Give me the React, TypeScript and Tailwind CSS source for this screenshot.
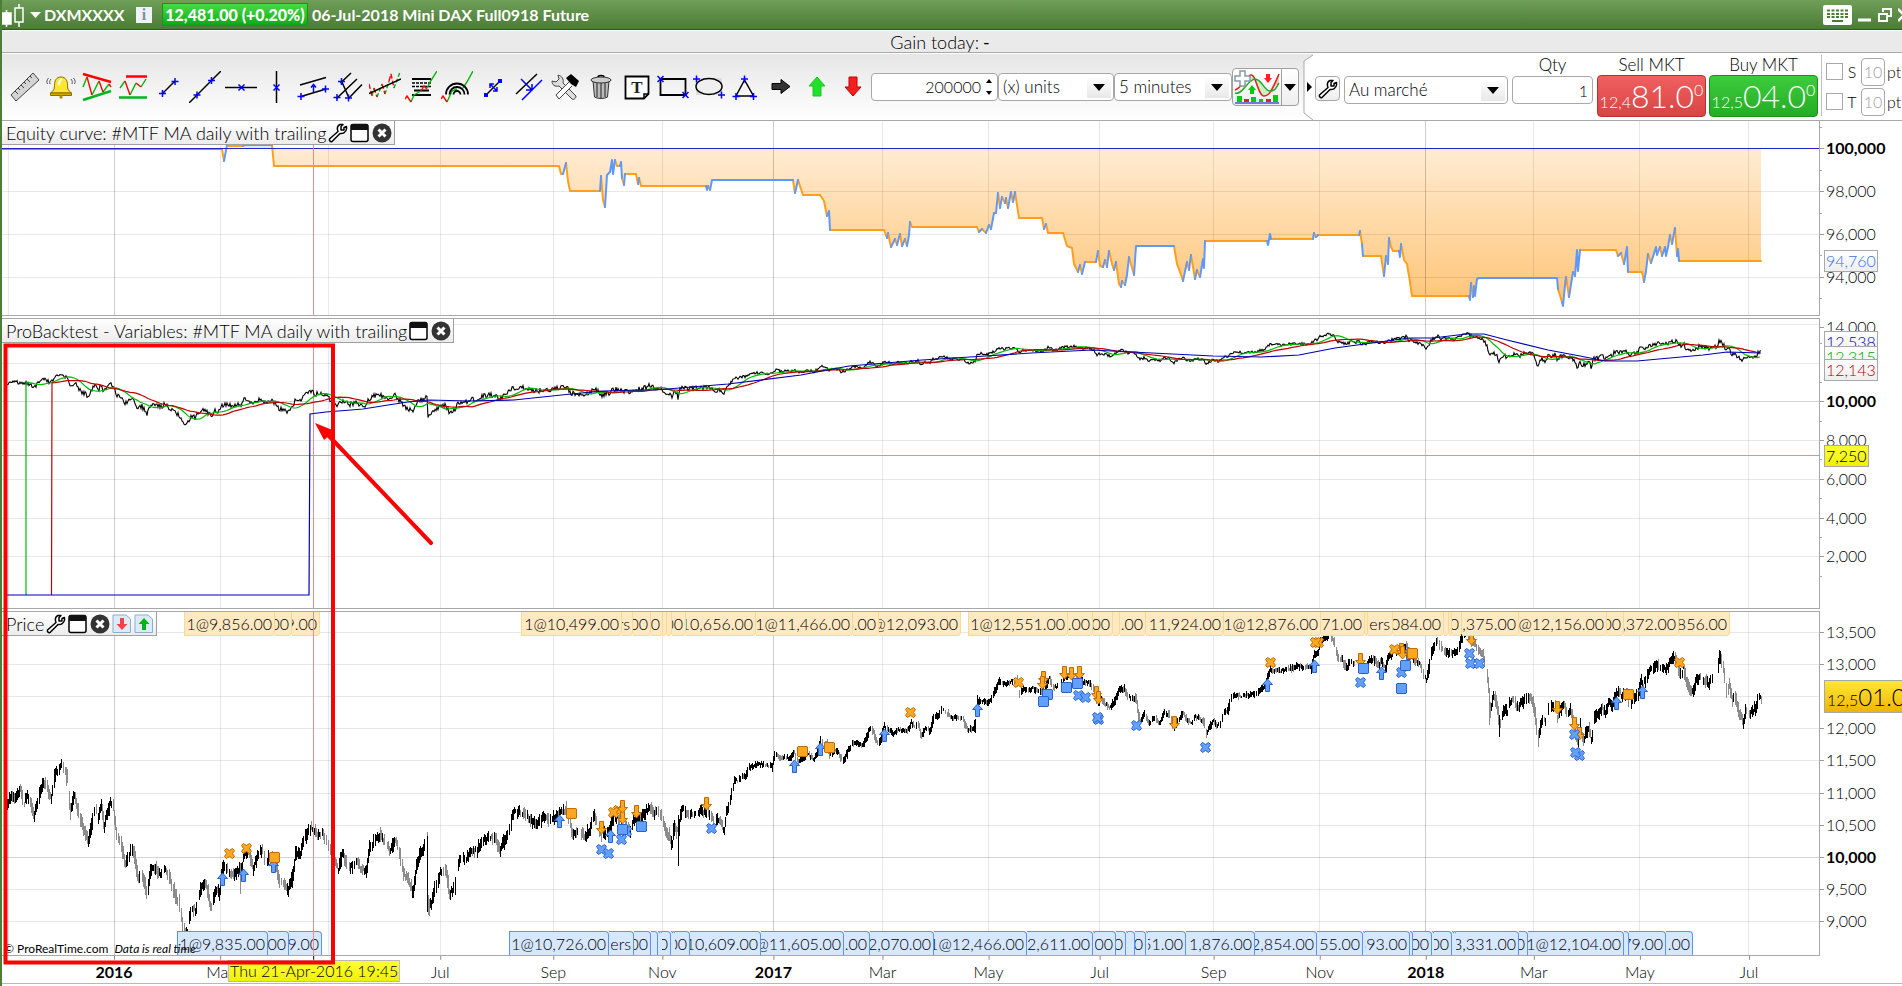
import React from "react";

type Pt = [number, number];

const parse = (s: string): Pt[] =>
  s.trim().split(/\s+/).map((p) => p.split(",").map(Number) as Pt);

/* ------------------------------------------------------------------ data */

const MONTHS = [8, 114, 220, 328, 440, 553, 662, 773, 882, 988, 1099, 1213, 1319, 1425, 1533, 1639, 1748];
const YEARS = [114, 773, 1425];
const CURSOR_X = 313;

const EQUITY = parse(`2,149 222,149 224,161 227,145 229,146 243,146 244,145 272,145 274,166 559,166 561,174 563,174 566,163 568,181 570,191
600,191 601,176 603,200 605,207 607,175 610,172 612,160 613,174 615,160 617,166 620,166 621,162 622,178 624,185 625,174 636,174 638,184
639,178 641,186 706,186 707,190 708,186 710,190 712,180 793,180 795,193 798,180 801,189 803,195 820,195 824,201 827,216 829,211 830,230
884,230 887,238 888,233 891,247 895,239 897,245 900,234 902,246 905,239 907,246 909,235 910,222 912,227 977,227 979,232 982,229 986,233
989,225 991,229 994,213 996,213 998,193 1000,208 1002,197 1005,203 1006,198 1008,208 1011,192 1013,202 1015,192 1019,218 1042,218
1044,229 1046,224 1048,233 1063,233 1067,246 1072,248 1074,264 1078,272 1080,265 1082,274 1085,262 1096,262 1098,251 1100,266 1103,267
1105,260 1107,267 1109,251 1112,264 1114,270 1116,262 1119,284 1121,287 1122,281 1125,285 1127,275 1129,257 1134,275 1136,246 1174,246
1177,264 1180,272 1183,281 1187,262 1189,270 1191,255 1195,279 1197,270 1200,277 1203,259 1204,268 1205,241 1267,241 1268,245 1270,234
1271,239 1313,239 1314,233 1316,237 1318,235 1359,235 1360,231 1362,244 1363,256 1381,256 1384,276 1386,256 1388,264 1389,238 1391,247
1393,251 1399,251 1400,257 1401,244 1404,260 1407,264 1410,282 1412,296 1469,296 1470,300 1471,283 1473,297 1474,286 1475,296 1477,279
1479,278 1557,278 1558,289 1562,302 1563,306 1565,285 1566,277 1569,297 1573,272 1575,276 1577,250 1578,271 1580,250 1616,250 1618,256
1621,253 1624,264 1627,247 1628,272 1642,272 1644,282 1646,271 1648,254 1651,263 1656,247 1657,255 1660,247 1662,256 1665,247 1666,256
1668,247 1670,235 1672,244 1675,228 1677,256 1678,249 1679,261 1761,261`);

const BLUE_FLATS = [2, 712, 1136, 1479, 244];

const PRICE = parse(`7,803 11,795 16,797 20,790 24,802 27,795 34,815 38,800 42,785 46,785 51,797 55,775 57,770 62,765 67,778 70,812 74,795
80,820 88,840 91,825 95,805 98,820 101,805 104,825 110,803 113,806 116,835 120,840 125,865 130,852 133,850 138,880 142,875 147,897 150,870
155,868 160,875 165,868 170,880 175,895 180,905 182,925 187,935 191,905 195,912 200,888 206,885 211,908 215,890 219,893 222,868 228,870
233,875 238,870 242,868 243,855 248,850 253,868 258,855 262,850 266,865 270,855 276,865 279,880 284,885 288,890 293,873 295,855 300,853
304,840 308,830 311,827 314,830 318,835 322,833 326,840 330,850 333,858 338,870 342,855 346,860 350,868 356,862 361,868 366,870 369,850
374,840 380,836 385,842 390,850 395,838 400,855 403,873 408,880 413,892 416,867 419,855 423,850 427,838 428,905 431,905 434,890 440,873
446,870 449,895 455,885 457,865 461,858 465,860 470,852 477,850 483,840 490,836 495,838 500,850 505,838 510,825 513,813 518,812 524,812
530,820 535,825 540,822 545,815 550,820 555,817 560,812 566,810 570,825 572,832 580,832 585,838 590,828 594,815 598,825 602,838 605,832
609,830 612,820 616,818 621,820 625,825 630,830 633,820 637,818 641,818 645,812 649,807 654,813 659,813 662,818 666,832 670,838 672,845
673,830 677,830 678,858 679,830 680,815 682,810 686,812 689,815 695,813 698,813 702,811 705,813 711,815 714,823 718,818 721,823 724,832
726,812 729,805 732,790 734,781 738,781 741,777 745,776 748,768 752,766 757,764 764,765 772,766 774,757 777,754 780,758 786,758 791,758
794,752 796,760 802,760 807,754 814,759 818,752 820,740 823,744 827,745 829,755 834,750 838,752 842,761 845,757 848,750 852,744 857,742
862,746 866,738 870,728 873,732 877,743 880,740 884,726 888,729 893,733 898,730 904,731 909,729 911,722 914,726 918,724 921,736 925,728
930,731 933,718 938,715 942,708 946,712 952,718 957,717 963,720 968,730 971,729 975,726 977,703 981,700 986,703 992,698 995,690 999,680
1004,684 1011,682 1017,682 1019,695 1024,688 1028,690 1033,688 1038,692 1043,690 1046,685 1049,677 1053,688 1058,685 1063,679 1069,676
1076,676 1083,682 1088,682 1094,690 1097,705 1101,698 1104,703 1110,707 1115,700 1119,690 1124,689 1128,697 1133,698 1136,700 1138,715
1140,720 1144,713 1149,723 1154,718 1160,723 1164,712 1169,715 1174,730 1178,720 1183,713 1187,720 1192,723 1195,716 1199,718 1204,722
1206,734 1210,726 1213,721 1217,725 1221,722 1224,712 1228,710 1230,698 1235,695 1242,696 1249,695 1256,694 1261,688 1265,685 1268,675
1270,670 1276,670 1281,671 1286,669 1292,668 1297,666 1303,668 1308,667 1311,668 1314,655 1318,652 1320,642 1326,637 1329,634 1333,640
1336,650 1338,658 1342,660 1346,668 1351,660 1354,663 1359,658 1361,666 1365,668 1369,660 1373,658 1378,665 1381,662 1385,668 1388,657
1394,650 1401,652 1406,645 1409,655 1415,662 1420,664 1424,675 1426,680 1429,668 1431,655 1435,645 1438,641 1442,650 1447,652 1453,653
1457,650 1460,642 1463,633 1467,632 1470,640 1475,645 1479,652 1483,655 1485,665 1487,678 1489,695 1490,710 1493,695 1496,700 1499,725
1502,715 1505,708 1507,715 1508,705 1513,700 1517,708 1522,702 1527,696 1530,698 1533,705 1535,718 1538,740 1540,725 1542,718 1545,722
1548,710 1552,706 1555,705 1557,718 1560,710 1564,706 1567,715 1570,710 1573,720 1576,735 1578,745 1580,725 1583,740 1587,730 1589,728
1591,742 1594,718 1598,714 1602,708 1605,714 1608,702 1612,704 1615,696 1617,692 1622,695 1627,696 1630,707 1633,698 1638,692 1641,680
1643,685 1647,677 1649,669 1653,670 1657,665 1662,669 1667,667 1670,662 1675,657 1678,668 1681,676 1683,668 1686,680 1689,690 1693,692
1696,680 1700,677 1705,680 1708,685 1713,676 1717,675 1719,657 1722,662 1724,675 1726,690 1729,686 1732,700 1735,697 1738,712 1741,716
1743,722 1746,708 1748,716 1752,710 1756,708 1758,698 1761,698`);

const SLOW_MA = `7,595 309,595 310,414 326,412 363,409 388,405 408,402 429,400 469,401 514,400 571,394 604,391 640,390 655,390 728,384
801,375 849,366 922,360 970,357 1031,353 1092,350 1152,353 1213,356 1262,357 1299,355 1335,348 1372,343 1409,338 1433,338 1466,334
1484,334 1507,340 1548,350 1580,356 1605,361 1637,361 1670,358 1703,355 1727,352 1761,353`;

type Tag = [number, number, string];

const SELL_TAGS: Tag[] = [
  [184, 275, "1@9,856.00"], [275, 292, "00"], [292, 320, "9.00"],
  [521, 622, "1@10,499.00"], [622, 633, "rs"], [633, 651, "00"], [651, 663, "0"], [663, 667, ""], [667, 672, ""], [672, 686, "00"],
  [686, 756, "10,656.00"], [756, 853, "1@11,466.00"], [853, 879, "6.00"], [879, 961, "@12,093.00"],
  [968, 1068, "1@12,551.00"], [1068, 1093, ".00"], [1093, 1113, "00"], [1113, 1120, ""], [1120, 1146, ".00"], [1146, 1148, ""],
  [1148, 1224, "11,924.00"], [1224, 1321, "1@12,876.00"], [1321, 1365, "71.00"], [1365, 1368, ""], [1368, 1393, "ers"],
  [1393, 1444, "084.00"], [1444, 1449, ""], [1449, 1452, ""], [1452, 1462, "0"], [1462, 1519, ",375.00"], [1519, 1607, "@12,156.00"],
  [1607, 1624, "00"], [1624, 1679, ",372.00"], [1679, 1730, "856.00"],
];

const BUY_TAGS: Tag[] = [
  [177, 268, "1@9,835.00"], [268, 289, "00"], [289, 322, "9.00"],
  [509, 609, "1@10,726.00"], [609, 634, "ers"], [634, 651, "00"], [651, 658, ""], [658, 660, ""], [660, 662, ""], [662, 671, "0"],
  [671, 673, ""], [673, 675, ""], [675, 690, "00"], [690, 761, "10,609.00"], [761, 844, "@11,605.00"], [844, 870, ".00"],
  [870, 934, "2,070.00"], [934, 1027, "1@12,466.00"], [1027, 1093, "2,611.00"], [1093, 1095, ""], [1095, 1116, "00"],
  [1116, 1126, "0"], [1126, 1128, ""], [1128, 1135, ""], [1135, 1146, "0"], [1146, 1148, ""], [1148, 1186, "51.00"],
  [1186, 1255, "1,876.00"], [1255, 1317, "2,854.00"], [1317, 1363, "55.00"], [1363, 1365, ""], [1365, 1410, "393.00"],
  [1410, 1413, ""], [1413, 1432, "00"], [1432, 1434, ""], [1434, 1452, "00"], [1452, 1454, ""], [1454, 1456, ""],
  [1456, 1519, "3,331.00"], [1519, 1528, "0"], [1528, 1624, "1@12,104.00"], [1624, 1629, ""], [1629, 1666, "79.00"], [1666, 1693, ".00"],
];

const MARKS: Record<"xo" | "xb" | "so" | "sb" | "do" | "ub", Pt[]> = {
  ub: parse("222,879 243,875 273,866 559,821 610,836 794,766 820,749 884,735 977,710 1267,685 1314,666 1381,673 1408,653 1616,703 1642,692"),
  xo: parse("229,853 246,848 618,810 613,812 910,712 1018,682 1270,662 1318,642 1315,642 1394,649 1679,662"),
  do: parse("601,827 622,817 622,806 636,811 706,803 1043,677 1042,682 1064,672 1071,673 1079,672 1096,692 1098,697 1174,722 1360,659 1401,649 1402,652 1471,638 1557,707 1579,733 1574,723"),
  xb: parse("626,831 621,839 601,849 608,853 711,828 1078,695 1085,697 1098,719 1097,717 1136,725 1205,747 1360,682 1401,672 1469,653 1470,663 1479,663 1574,734 1579,755 1575,752"),
  so: parse("274,857 571,813 802,751 829,747 1412,653 1628,694"),
  sb: parse("622,829 641,826 1047,694 1043,701 1066,687 1077,683 1363,668 1405,665 1401,688"),
};

/* --------------------------------------------------------------- helpers */

const line = (pts: Pt[]) => "M" + pts.map((p) => `${p[0]},${p[1].toFixed(1)}`).join("L");

const noise = (n: number) => {
  const v = Math.sin(n * 127.1 + 11.7) * 43758.5453;
  return (v - Math.floor(v)) * 2 - 1;
};

const at = (pts: Pt[], x: number) => {
  let i = 1;
  while (i < pts.length - 1 && pts[i][0] < x) i++;
  const [x0, y0] = pts[i - 1];
  const [x1, y1] = pts[i];
  const t = Math.max(0, Math.min(1, (x - x0) / (x1 - x0)));
  return y0 + (y1 - y0) * t;
};

const SERIES: Pt[] = Array.from({ length: 1755 }, (_, i) => [7 + i, at(PRICE, 7 + i)] as Pt);

const volatility = (x: number) => (x < 720 ? 4.2 : x < 1330 ? 2.3 : x < 1485 ? 3 : 4);

function priceBars() {
  let up = "";
  let down = "";
  SERIES.forEach(([x, y], i) => {
    if (noise(x + 77) < -0.7) return;
    const v = volatility(x);
    const mid = y + noise(x) * v * 0.6;
    const slope = SERIES[Math.min(i + 2, SERIES.length - 1)][1] - SERIES[Math.max(i - 2, 0)][1];
    const half = v * (0.5 + Math.abs(noise(x + 500)) * 0.9) + Math.min(4, Math.abs(slope) / 5);
    const bar = `M${x + 0.5},${(mid - half).toFixed(1)}V${(mid + half).toFixed(1)}`;
    if (slope + noise(x + 900) * 5 > 2) down += bar;
    else up += bar;
  });
  return { up, down };
}

const toVariable = (y: number) => 401.3 + (y - 857.3) * 0.3027;

const average = (period: number): Pt[] => {
  const out: Pt[] = [];
  for (let i = period; i < SERIES.length; i += 3) {
    let sum = 0;
    for (let k = i - period; k < i; k++) sum += SERIES[k][1];
    out.push([SERIES[i][0], toVariable(sum / period)]);
  }
  return out;
};

const BARS = priceBars();
const FAST = average(19);
const MEDIUM = average(45);
const CLOSE: Pt[] = SERIES.map(([x, y]) => [x, toVariable(y) + noise(x + 30) * volatility(x) * 0.6]);

/* ----------------------------------------------------------------- icons */

const Plus = ({ x, y }: { x: number; y: number }) => (
  <path d={`M${x - 3.5},${y}h7M${x},${y - 3.5}v7`} stroke="#00f" strokeWidth="1.5" />
);
const Cross = ({ x, y }: { x: number; y: number }) => (
  <path d={`M${x - 3},${y - 3}l6,6M${x + 3},${y - 3}l-6,6`} stroke="#00f" strokeWidth="1.5" />
);

const K = { stroke: "#000", strokeWidth: 1.5, fill: "none" };
const B = { stroke: "#00f", strokeWidth: 1.5, fill: "none" };
const G = { stroke: "#00b400", strokeWidth: 1.4, fill: "none" };
const R = { stroke: "#f00", strokeWidth: 1.4, fill: "none" };

const TOOLS: { name: string; icon: React.ReactNode }[] = [
  { name: "Ruler", icon: <><path d="M2,24L24,2L30,9L7,30Z" fill="#d4d4d4" stroke="#444" /><path d="M6,20l3,3M9,17l2,2M12,14l3,3M15,11l2,2M18,8l3,3M21,5l2,2" stroke="#444" /></> },
  { name: "Alarm", icon: <><path d="M16,6c-5,0-6.500,4-6.500,8.500c0,4-1,5-4,7.500h21c-3-2.500-4-3.500-4-7.500C22.500,10,21,6,16,6Z" fill="#ffe633" stroke="#8a6d00" /><path d="M14,14c0-3,1-5,3-6" stroke="#fff" strokeWidth="2" fill="none" /><path d="M5.500,22h21v2.500h-21Z" fill="#d9a900" stroke="#8a6d00" /><circle cx="16" cy="26" r="1.700" fill="#b98d00" /><path d="M6,8c-1.500,2-1.500,3-1,5M3.500,7c-2,2.500-2,4-1,6M26,8c1.500,2,1.500,3,1,5M28.500,7c2,2.500,2,4,1,6" stroke="#555" fill="none" /></> },
  { name: "Triangle pattern", icon: <><path d="M2,16L6,6M11,24L18,10M22,21L28,13" {...G} /><path d="M6,6L11,24M18,10L22,21M28,13l2,3" {...R} /><path d="M2,3L30,11" stroke="#f00" strokeWidth="2.500" /><path d="M2,29L30,20" stroke="#00b41e" strokeWidth="2.500" /></> },
  { name: "Support and resistance", icon: <><path d="M3,17L8,10M13,24L19,12M24,16L29,8" {...G} /><path d="M8,10L13,24M19,12L24,16" {...R} /><path d="M9,5.500H30" stroke="#f00" strokeWidth="2.500" /><path d="M2,26.500H30" stroke="#00b41e" strokeWidth="2.500" /></> },
  { name: "Segment", icon: <><path d="M10,22L22,10" {...K} /><Plus x={9.5} y={22.5} /><Plus x={22} y={10.5} /></> },
  { name: "Line", icon: <><path d="M0,32L32,0" {...K} /><Plus x={8} y={24} /><Plus x={22.5} y={9.5} /></> },
  { name: "Horizontal line", icon: <><path d="M0,16.500H32" {...K} /><Cross x={16.5} y={16.5} /></> },
  { name: "Vertical line", icon: <><path d="M15.500,0V32" {...K} /><Cross x={15.5} y={16.5} /></> },
  { name: "Channel", icon: <><path d="M3,14L29,6.500M4,25.500L29,18" {...K} /><Plus x={4} y={25.5} /><Plus x={28.5} y={18} /><path d="M16.500,21V14M14,16.500L16.500,13.500L19,16.500" {...B} /></> },
  { name: "Pitchfork", icon: <><path d="M18,2L7.500,12M24,8L3.500,27.500M29,13.500L15.500,27.500M8.500,10L16,27" {...K} /><Plus x={8.5} y={10.5} /><Plus x={4} y={26.5} /><Plus x={15.5} y={27} /></> },
  { name: "Regression", icon: <><path d="M3,25L5,17M8,26L13,13M16,23L20,10M25,17L31,1" {...G} strokeDasharray="4 2" /><path d="M0,13L3,25M5,17L8,26M13,13L16,23M20,10L22,3L25,17" {...R} strokeDasharray="5 2" /><path d="M0,22.500L32,8" {...K} /></> },
  { name: "Fibonacci", icon: <><path d="M7,8H26M7,24H26M9,19.500H24" stroke="#000" strokeWidth="1.800" /><path d="M7,12H26M7,15.500H26" stroke="#000" strokeWidth="1.500" strokeDasharray="3 1" /><path d="M6,31L9,24L16,20M22,17L25,11L32,0" {...G} /><path d="M0,28L2,25L6,31M16,20L19,15L22,18" {...R} /></> },
  { name: "Fibonacci arcs", icon: <><path d="M6,31L11,20L16,18M22,17L26,11L32,0" {...G} /><path d="M0,28L2,25L6,31" {...R} /><path d="M5,23.500a11,11 0 0 1 22,0M8.500,23.500a7.500,7.500 0 0 1 15,0M12.500,23.500a3.500,3.500 0 0 1 7,0" stroke="#000" strokeWidth="1.800" fill="none" /></> },
  { name: "Move point", icon: <><path d="M9,24L23,10" {...K} /><path d="M7,22h4v4h-4ZM21,8h4v4h-4Z" fill="#00f" /><path d="M13,13L20,20M13,17V13H17M20,16V20H16" {...B} /></> },
  { name: "Parallel", icon: <><path d="M3,23L24,3" {...K} /><path d="M9,29L29,9M8,8L19,19M19,13V19H13" {...B} /></> },
  { name: "Tools", icon: <><path d="M9,4l1,4l-3,3l-4-1c0,4,3,6,7,5l13,13c1,1,4,0,4-3L14,12c1-4-1-7-5-8Z" fill="#ddd" stroke="#444" /><path d="M20,11L7,24l3,4L23,15" fill="#fff" stroke="#444" /><path d="M17,7l5-4l8,7l-3,6l-5-3Z" fill="#000" /></> },
  { name: "Delete", icon: <><path d="M8,10l1.500,16c3,2,10,2,13,0L24,10Z" fill="#bbb" stroke="#333" /><path d="M12,12v14M16,12v15M20,12v14" stroke="#555" strokeWidth="1.500" /><ellipse cx="16" cy="9" rx="10" ry="3" fill="#ccc" stroke="#333" /><path d="M13,6c0-2,6-2,6,0" {...K} /></> },
  { name: "Text", icon: <><path d="M4.500,5.500H27.500V23L23,27.500H4.500Z" fill="#fff" stroke="#000" strokeWidth="1.800" /><path d="M27.500,23H23V27.500" {...K} /><text x="16" y="22" textAnchor="middle" fontFamily="Liberation Serif" fontWeight="bold" fontSize="17" fill="#222">T</text></> },
  { name: "Rectangle", icon: <><path d="M3.500,8H28.500V24H3.500Z" stroke="#000" strokeWidth="1.800" fill="none" /><Cross x={3.5} y={8} /><Cross x={28.5} y={24} /></> },
  { name: "Ellipse", icon: <><path d="M3,7H29V24H3Z" fill="#dcdcdc" /><ellipse cx="16" cy="15.500" rx="13" ry="8" fill="#efefef" stroke="#000" strokeWidth="1.500" /><Plus x={3.5} y={8} /><Plus x={28.5} y={24} /></> },
  { name: "Triangle", icon: <><path d="M15.500,9L7,25H24.500Z" {...K} /><Plus x={15.5} y={8} /><Plus x={7} y={25.5} /><Plus x={24.5} y={25.5} /></> },
  { name: "Arrow right", icon: <path d="M7,12.500H16V8.500L25,15.500L16,22.500V18.500H7Z" fill="#333" stroke="#000" /> },
  { name: "Arrow up", icon: <path d="M16,6L24,15H20V25H12V15H8Z" fill="#22e02a" stroke="#1cc824" /> },
  { name: "Arrow down", icon: <path d="M16,25L8,16H12V6H20V16H24Z" fill="#f42020" stroke="#c40000" /> },
];

const Wrench = () => (
  <svg viewBox="0 0 20 20" className="size-5 shrink-0" fill="#fff" stroke="#000" strokeWidth="1.500" strokeLinejoin="round">
    <path d="M12,1.500C9,3,9,6,10,8.500L1.500,16C1,18,2.500,19,4,18.500L12,10.500C15,11,18,9,18.500,6V3.500L16,4.500V7H13V3.500L15,1.500Z" />
  </svg>
);

const WindowIcon = () => (
  <svg viewBox="0 0 20 20" className="size-5 shrink-0">
    <rect x="1" y="1.500" width="17" height="17" rx="2" fill="#fff" stroke="#000" strokeWidth="1.500" />
    <path d="M1,7V3a2,2 0 0 1 2-2H16a2,2 0 0 1 2,2V7Z" fill="#111" />
  </svg>
);

const CloseIcon = () => (
  <svg viewBox="0 0 20 20" className="size-5 shrink-0">
    <circle cx="10" cy="10" r="9.500" fill="#333" />
    <path d="M6.500,6.500L13.500,13.500M13.500,6.500L6.500,13.500" stroke="#fff" strokeWidth="3" />
  </svg>
);

const SheetIcon = ({ up }: { up?: boolean }) => (
  <svg viewBox="0 0 20 20" className="size-5 shrink-0">
    <path d="M1,1H14L18.500,5V18.500H1Z" fill="#dcebf7" stroke="#8cb0cc" />
    {up ? <path d="M10,4L15.500,10H12V16H8V10H4.500Z" fill="#00b414" /> : <path d="M10,16L4.500,10H8V4H12V10H15.500Z" fill="#f4404a" />}
  </svg>
);

/* ---------------------------------------------------------------- charts */

const Months = ({ y0, y1 }: { y0: number; y1: number }) => (
  <g shapeRendering="crispEdges">
    {MONTHS.map((x) => (
      <path key={x} d={`M${x + 0.5},${y0}V${y1}`} stroke="#000" strokeOpacity={YEARS.includes(x) ? 0.2 : 0.09} />
    ))}
  </g>
);

const Rows = ({ ys, strong }: { ys: number[]; strong?: number }) => (
  <g shapeRendering="crispEdges">
    {ys.map((y) => (
      <path key={y} d={`M2,${y + 0.5}H1820`} stroke="#000" strokeOpacity={y === strong ? 0.17 : 0.09} />
    ))}
  </g>
);

function EquityChart() {
  let gain = "";
  let loss = "";
  for (let i = 1; i < EQUITY.length; i++) {
    const [x0, y0] = EQUITY[i - 1];
    const [x1, y1] = EQUITY[i];
    const seg = `M${x0},${y0}L${x1},${y1}`;
    const blue = Math.abs(y1 - y0) < 1 ? BLUE_FLATS.includes(x0) : y1 < y0 || (x1 - x0 < 2 && y1 - y0 > 3);
    if (blue) gain += seg;
    else loss += seg;
  }
  const area = EQUITY.filter((p) => p[0] >= 272);
  return (
    <svg viewBox="2 121 1817 194" preserveAspectRatio="none" className="block size-full">
      <defs>
        <linearGradient id="lossFill" gradientUnits="userSpaceOnUse" x1="0" y1="148" x2="0" y2="300">
          <stop offset="0" stopColor="#ff9f20" stopOpacity="0.200" />
          <stop offset="1" stopColor="#ff9f20" stopOpacity="0.600" />
        </linearGradient>
      </defs>
      <path d={line(area.map(([x, y]) => [x, Math.max(y, 148)])) + "V148H272Z"} fill="url(#lossFill)" />
      <path d="M244,144H272V148H244Z" fill="#dceafc" />
      <Months y0={121} y1={315} />
      <Rows ys={[191, 234, 277]} />
      <path d={loss} stroke="#ff9f1e" strokeWidth="2" strokeLinecap="round" fill="none" />
      <path d={gain} stroke="#5f98fa" strokeWidth="2" strokeLinecap="round" fill="none" />
      <path d="M2,148.500H1820" stroke="#2424c8" shapeRendering="crispEdges" />
      <path d={`M${CURSOR_X + 0.5},121V315`} stroke="#f08a8a" shapeRendering="crispEdges" />
    </svg>
  );
}

function VariablesChart() {
  return (
    <svg viewBox="2 319 1817 289" preserveAspectRatio="none" className="block size-full">
      <Months y0={319} y1={608} />
      <Rows ys={[324, 363, 401, 440, 479, 518, 556]} strong={401} />
      <path d="M2,455.500H1820M313.500,319V608" stroke="#f08a8a" shapeRendering="crispEdges" />
      <path d={line(CLOSE)} stroke="#000" strokeWidth="1.100" fill="none" />
      <path d={`M26,595${line(FAST).replace("M", "L")}`} stroke="#0b0" strokeWidth="1.200" fill="none" />
      <path d={`M51.500,595${line(MEDIUM).replace("M", "L")}`} stroke="#c00000" strokeWidth="1.200" fill="none" />
      <path d={line(parse(SLOW_MA))} stroke="#0000b4" strokeWidth="1.200" fill="none" />
    </svg>
  );
}

const SHAPES = {
  x: "M-5,-3L-3,-5L0,-3L3,-5L5,-3L3,0L5,3L3,5L0,3L-3,5L-5,3L-3,0Z",
  s: "M-5,-4.500L-4.500,-5H4.500L5,-4.500V4.500L4.500,5H-4.500L-5,4.500Z",
  d: "M-2,-6H2V1H5L0,6.500L-5,1H-2Z",
  u: "M-2,6H2V-1H5L0,-6.500L-5,-1H-2Z",
};

function PriceChart() {
  return (
    <svg viewBox="2 612 1817 343" preserveAspectRatio="none" className="block size-full">
      <Months y0={612} y1={955} />
      <Rows ys={[632, 664, 696, 728, 760, 793, 825, 857, 889, 921]} strong={857} />
      <path d={BARS.down} stroke="#8c8c8c" fill="none" shapeRendering="crispEdges" />
      <path d={BARS.up} stroke="#000" fill="none" shapeRendering="crispEdges" />
      <path d="M427.500,836V912M678.500,815V858M1499.500,715V737" stroke="#000" shapeRendering="crispEdges" />
      <path d="M1489.500,690V725M380.500,827V840M558.500,810V818M1538.500,730V747M240.500,870V894" stroke="#8c8c8c" shapeRendering="crispEdges" />
      {(Object.keys(MARKS) as (keyof typeof MARKS)[]).map((kind) => (
        <g key={kind} fill={kind[1] === "b" ? "#62a0ff" : "#fba722"} stroke={kind[1] === "b" ? "#2a62cc" : "#c46a00"}>
          {MARKS[kind].map(([x, y], i) => (
            <path key={i} d={SHAPES[kind[0] as keyof typeof SHAPES]} transform={`translate(${x + 0.5} ${y + 0.5})`} />
          ))}
        </g>
      ))}
    </svg>
  );
}

const left = (x: number) => `${((x - 2) / 1817) * 100}%`;
const width = (w: number) => `${(w / 1817) * 100}%`;

const TagStrip = ({ tags, buy }: { tags: Tag[]; buy?: boolean }) => (
  <>
    {tags.map(([x0, x1, text], i) => (
      <span
        key={x0}
        style={{ left: left(x0), width: width(x1 - x0) }}
        className={[
          "absolute flex h-6 items-center justify-end overflow-hidden border-r pr-0.5 whitespace-nowrap",
          buy ? "bottom-0 rounded-tr border-t border-[#5b93f5] bg-[#d6e7ff]" : "top-0 rounded-br border-b border-[#ffd890] bg-[#ffe9c3]",
          i === 0 || tags[i - 1][1] !== x0 ? "border-l" : "",
        ].join(" ")}
      >
        {text}
      </span>
    ))}
  </>
);

type AxisLabel = [number, string, boolean?];

function Axis({ top, height, labels, minor, children }: { top: number; height: number; labels: AxisLabel[]; minor: number[]; children?: React.ReactNode }) {
  return (
    <div className="relative w-[82px] shrink-0 overflow-hidden">
      <svg viewBox={`0 ${top} 82 ${height}`} preserveAspectRatio="none" className="block size-full" shapeRendering="crispEdges">
        {labels.map(([y]) => <path key={y} d={`M0,${y + 0.5}H4`} stroke="#999" />)}
        {minor.map((y) => <path key={y} d={`M0,${y + 0.5}H2`} stroke="#aaa" />)}
      </svg>
      {labels.map(([y, text, bold]) => (
        <span
          key={text}
          style={{ top: `${((y - top) / height) * 100}%` }}
          className={bold ? "absolute left-1.5 -translate-y-1/2 leading-5 font-bold" : "absolute left-1.5 -translate-y-1/2 leading-5"}
        >
          {text}
        </span>
      ))}
      {children}
    </div>
  );
}

const PriceTag = ({ at: y, color, children }: { at: number; color: string; children: React.ReactNode }) => (
  <span style={{ top: `${y}%` }} className={`absolute left-1 border border-[#a8a8a8] px-px leading-5 ${color}`}>
    {children}
  </span>
);

const PanelTitle = ({ title, children }: { title: string; children: React.ReactNode }) => (
  <div className="absolute top-0 left-0 flex h-6 items-center gap-0.5 border-r border-b border-[#a0a0a0] bg-gradient-to-b from-white to-[#ececec] pr-0.5 pl-1">
    <h2 className="text-lg leading-5 whitespace-nowrap">{title}</h2>
    {children}
  </div>
);

const IconButton = ({ label, children }: { label: string; children: React.ReactNode }) => (
  <button type="button" aria-label={label} className="block">{children}</button>
);

/* --------------------------------------------------------------- toolbar */

const Caret = () => <svg viewBox="0 0 12 7" className="pointer-events-none h-[7px] w-3"><path d="M0,0H12L6,7Z" /></svg>;

const Select = ({ label, value, className }: { label: string; value: string; className: string }) => (
  <div className={`relative flex h-7 shrink-0 items-center rounded border border-[#a8a8a8] bg-white ${className}`}>
    <select aria-label={label} defaultValue={value} className="size-full appearance-none bg-transparent pl-1 text-[17px] outline-none">
      <option>{value}</option>
    </select>
    <span className="pointer-events-none absolute inset-y-0.5 right-0.5 flex w-6 items-center justify-center bg-gradient-to-b from-white to-[#e8e8e8]"><Caret /></span>
  </div>
);

const Deal = ({ label, small, big, className }: { label: string; small: string; big: string; className: string }) => (
  <div className="flex w-[109px] shrink-0 flex-col items-center">
    <span className="h-5 text-[17px] leading-5">{label}</span>
    <button type="button" aria-label={label} className={`flex h-[42px] w-full items-baseline justify-center rounded border text-white ${className}`}>
      <span>{small}</span>
      <span className="text-[32px] leading-10">{big}</span>
      <span className="self-start pt-1.5 leading-4">0</span>
    </button>
  </div>
);

const StopRow = ({ name }: { name: string }) => (
  <label className="flex h-[29px] items-center gap-0.5">
    <input type="checkbox" className="size-[17px] shrink-0 appearance-none border border-[#a8a8a8] bg-white" />
    <span className="w-3.5 text-center">{name}</span>
    <input aria-label={`${name} distance`} defaultValue="10" className="h-7 w-6 shrink-0 rounded border border-[#a8a8a8] text-center text-[#a0a0a0]" />
    <span>pt</span>
  </label>
);

function Toolbar() {
  return (
    <div className="flex h-[67px] shrink-0 items-stretch overflow-hidden border-b border-[#a8a8a8] bg-gradient-to-b from-[#e6e6e6] to-white">
      <div className="flex shrink-0 items-center pl-[5px]">
        {TOOLS.map((t) => (
          <button key={t.name} type="button" aria-label={t.name} className="flex w-9 shrink-0 items-center justify-center">
            <svg viewBox="0 0 32 32" className="size-8">{t.icon}</svg>
          </button>
        ))}
        <div className="flex h-7 w-[127px] shrink-0 items-center rounded border border-[#a8a8a8] bg-white">
          <input aria-label="Number of units" defaultValue="200000" className="w-full min-w-0 bg-transparent text-right outline-none" />
          <svg viewBox="0 0 16 26" className="h-[26px] w-4 shrink-0"><path d="M5,9H11L8,5ZM5,17H11L8,21Z" /></svg>
        </div>
        <Select label="Unit type" value="(x) units" className="w-[116px]" />
        <Select label="Timeframe" value="5 minutes" className="w-[118px]" />
        <div className="flex h-[38px] w-[67px] shrink-0 rounded border border-[#a0a0a0] bg-gradient-to-b from-white to-[#eee]">
          <button type="button" aria-label="Indicators" className="flex w-[49px] items-center justify-center border-r border-[#a0a0a0]">
            <svg viewBox="0 0 46 34" className="h-[34px] w-[46px]" fill="none">
              <path d="M14,12C17,9 20,8 24,10C28,14 30,20 35,21L30,26C26,26 22,12 18,6Z" fill="#c8f0c0" />
              <path d="M35,21L45,5V13Z" fill="#f8c8c0" />
              <path d="M1,20C8,18 12,6 17,5S24,26 30,26S39,18 45,4" stroke="#d22" strokeWidth="1.500" />
              <path d="M1,23C8,26 14,9 21,9S30,21 36,21S42,17 45,13" stroke="#2a2" strokeWidth="1.500" />
              <path d="M6,1H11V6H16V11H11V16H6V11H1V6H6Z" fill="#fff" stroke="#8899a8" strokeWidth="1.500" />
              <path d="M18,15L22,20H20V24H16V20H14Z" fill="#0c1" />
              <path d="M34,13L30,8H32V4H36V8H38Z" fill="#f22" />
              <path d="M3,26H8V32H3ZM17,27H22V32H17ZM25,29H29V32H25ZM39,25H44V32H39Z" fill="#0c1" />
              <path d="M10,29H15V32H10ZM32,29H37V32H32Z" fill="#d22" />
              <path d="M1,33H45" stroke="#00c" />
            </svg>
          </button>
          <button type="button" aria-label="Indicator list" className="flex flex-1 items-center justify-center"><Caret /></button>
        </div>
      </div>
      <svg viewBox="0 0 10 66" className="ml-1 h-full w-2.5 shrink-0">
        <path d="M10,1L1,7V59L10,66Z" fill="#fff" /><path d="M10,1L1,7V59L10,66" stroke="#a8a8a8" fill="none" /><path d="M4,28V38L9,33Z" />
      </svg>
      <div className="flex min-w-0 flex-1 items-start bg-white pt-px pl-0.5">
        <button type="button" aria-label="Order settings" className="mt-[21px] flex size-[25px] shrink-0 items-center justify-center rounded border border-[#a8a8a8] bg-gradient-to-b from-white to-[#eee]"><Wrench /></button>
        <Select label="Order type" value="Au marché" className="mt-[21px] ml-1 w-[164px]" />
        <label className="ml-1 flex w-[81px] shrink-0 flex-col items-center">
          <span className="h-[21px] text-[17px] leading-5">Qty</span>
          <input defaultValue="1" className="h-7 w-full rounded border border-[#a8a8a8] bg-white pr-1 text-right" />
        </label>
        <div className="ml-1 flex gap-[3px]">
          <Deal label="Sell MKT" small="12,4" big="81.0" className="border-[#b83030] bg-gradient-to-b from-[#f06060] to-[#d84444]" />
          <Deal label="Buy MKT" small="12,5" big="04.0" className="border-[#189018] bg-gradient-to-b from-[#3ccc3c] to-[#26ac26]" />
        </div>
        <div className="ml-[3px] flex shrink-0 flex-col gap-px border-l border-[#c0c0c0] pt-0.5 pl-1">
          <StopRow name="S" />
          <StopRow name="T" />
        </div>
      </div>
    </div>
  );
}

const TIME_LABELS: [number, string, boolean?][] = [
  [114, "2016", true], [220, "Mar"], [440, "Jul"], [553, "Sep"], [662, "Nov"], [773, "2017", true], [882, "Mar"], [988, "May"],
  [1099, "Jul"], [1213, "Sep"], [1319, "Nov"], [1425, "2018", true], [1533, "Mar"], [1639, "May"], [1748, "Jul"],
];

/* ------------------------------------------------------------------ page */

export default function App() {
  return (
    <main className="flex h-screen min-h-[600px] flex-col overflow-hidden border-l-2 border-[#4d7e38] bg-white font-['Lato',sans-serif] text-base leading-5 font-light text-black">
      <header className="flex h-[30px] shrink-0 items-center overflow-hidden border-b border-[#2c5a1a] bg-gradient-to-b from-[#6f9f59] to-[#4b7c36] font-bold whitespace-nowrap text-white">
        <svg viewBox="0 0 24 26" className="h-[26px] w-6 shrink-0" fill="none" stroke="#fff" strokeWidth="1.500">
          <path d="M0,11H9V22H0Z" fill="#fff" /><path d="M4.500,8V25M17,2V6M17,20V25" /><path d="M13,6H21V20H13Z" />
        </svg>
        <svg viewBox="0 0 12 6" className="ml-1 h-1.5 w-3 shrink-0"><path d="M0,0H11L5.500,6Z" fill="#fff" /></svg>
        <h1 className="ml-0.5 w-[92px]">DXMXXXX</h1>
        <button type="button" aria-label="Information" className="flex size-4 items-center justify-center bg-[#eef1f6] font-['Liberation_Serif',serif] text-[#8090a4]">i</button>
        <strong className="ml-2.5 flex h-[23px] w-[146px] items-center justify-center border border-[#0c9c14] bg-gradient-to-b from-[#45dc45] to-[#0ca814]">12,481.00 (+0.20%)</strong>
        <span className="ml-1">06-Jul-2018 Mini DAX Full0918 Future</span>
        <div className="ml-auto flex shrink-0 items-center gap-1.5">
          <svg viewBox="0 0 29 20" className="h-5 w-[29px]">
            <rect width="29" height="20" rx="2" fill="#fff" />
            <path d="M4,5.500H25M4,9H25M4,12H25" stroke="#4b7c36" strokeWidth="2.200" strokeDasharray="3 1.500" /><path d="M9,16H20" stroke="#4b7c36" strokeWidth="2" />
          </svg>
          <svg viewBox="0 0 14 14" className="size-3.5"><path d="M0,12H13" stroke="#fff" strokeWidth="3" /></svg>
          <svg viewBox="0 0 14 14" className="size-3.5" fill="none" stroke="#fff" strokeWidth="2"><path d="M5,4V1H13V8H9M1,6H9V13H1Z" /></svg>
          <svg viewBox="0 0 4 14" className="h-3.5 w-1" fill="none" stroke="#fff" strokeWidth="2.500"><path d="M0,1L6,7L0,13" /></svg>
        </div>
      </header>
      <div className="mt-px flex h-[22px] shrink-0 items-center justify-center border-b border-[#a8a8a8] bg-[#eaeaea] pr-6 text-lg leading-5">Gain today: <b className="ml-1">-</b></div>
      <div className="h-px shrink-0 bg-white" />
      <Toolbar />

      <div className="relative flex min-h-0 flex-1 flex-col pb-0.5">
        <section className="flex min-h-0 flex-[195_1_0px]">
          <div className="relative min-w-0 flex-1 border-r border-b border-[#a8a8a8]">
            <EquityChart />
            <PanelTitle title="Equity curve: #MTF MA daily with trailing">
              <IconButton label="Configure equity curve"><Wrench /></IconButton>
              <IconButton label="Maximise equity curve"><WindowIcon /></IconButton>
              <IconButton label="Close equity curve"><CloseIcon /></IconButton>
            </PanelTitle>
          </div>
          <Axis top={121} height={195} minor={[127, 170, 213, 255, 298]} labels={[[148, "100,000", true], [191, "98,000"], [234, "96,000"], [277, "94,000"]]}>
            <PriceTag at={66} color="bg-gradient-to-b from-white to-[#eee] text-[#3474e8]">94,760</PriceTag>
          </Axis>
        </section>

        <section className="mt-0.5 flex min-h-0 flex-[291_1_0px]">
          <div className="relative min-w-0 flex-1 border-t border-r border-b border-[#a8a8a8]">
            <VariablesChart />
            <PanelTitle title="ProBacktest - Variables: #MTF MA daily with trailing">
              <IconButton label="Maximise variables"><WindowIcon /></IconButton>
              <IconButton label="Close variables"><CloseIcon /></IconButton>
            </PanelTitle>
          </div>
          <Axis top={318} height={291} minor={[343, 382, 421, 459, 498, 537, 576]} labels={[[327, "14,000"], [401, "10,000", true], [440, "8,000"], [479, "6,000"], [518, "4,000"], [556, "2,000"]]}>
            <PriceTag at={4.5} color="bg-gradient-to-b from-white to-[#eee] text-[#0000c0]">12,538</PriceTag>
            <PriceTag at={9.5} color="bg-gradient-to-b from-white to-[#eee] text-[#00a800]">12,315</PriceTag>
            <PriceTag at={14} color="bg-gradient-to-b from-white to-[#eee] text-[#c00000]">12,143</PriceTag>
            <PriceTag at={43.5} color="bg-gradient-to-b from-[#ffff30] to-[#f0f000]">7,250</PriceTag>
          </Axis>
        </section>

        <section className="mt-0.5 flex min-h-0 flex-[345_1_0px]">
          <div className="relative min-w-0 flex-1 border-t border-r border-b border-[#a8a8a8]">
            <PriceChart />
            <TagStrip tags={SELL_TAGS} />
            <TagStrip tags={BUY_TAGS} buy />
            <svg viewBox="2 612 1817 343" preserveAspectRatio="none" className="pointer-events-none absolute inset-0 size-full">
              <path d="M313.500,612V955" stroke="#f08a8a" shapeRendering="crispEdges" />
            </svg>
            <small className="absolute bottom-0 left-0.5 text-xs leading-3 font-normal whitespace-nowrap">© ProRealTime.com &nbsp;<i>Data is real time</i></small>
            <PanelTitle title="Price">
              <IconButton label="Configure price"><Wrench /></IconButton>
              <IconButton label="Maximise price"><WindowIcon /></IconButton>
              <IconButton label="Close price"><CloseIcon /></IconButton>
              <IconButton label="Move down"><SheetIcon /></IconButton>
              <IconButton label="Move up"><SheetIcon up /></IconButton>
            </PanelTitle>
          </div>
          <Axis top={611} height={345} minor={[]} labels={[[632, "13,500"], [664, "13,000"], [728, "12,000"], [760, "11,500"], [793, "11,000"], [825, "10,500"], [857, "10,000", true], [889, "9,500"], [921, "9,000"]]}>
            <span style={{ top: "20%" }} className="absolute left-1 flex h-[33px] items-baseline border border-[#a8a8a8] bg-gradient-to-b from-[#ffe830] to-[#f0b400] pl-0.5 leading-8 whitespace-nowrap">
              12,5<span className="text-2xl leading-8">01.00</span>
            </span>
          </Axis>
        </section>

        <footer className="relative h-7 shrink-0 border-b border-[#b8b8b8]">
          <div className="relative mr-[82px] h-full">
            <svg viewBox="2 956 1817 28" preserveAspectRatio="none" className="absolute inset-0 size-full" shapeRendering="crispEdges">
              {TIME_LABELS.map(([x]) => <path key={x} d={`M${x + 0.5},956v4`} stroke="#888" />)}
              <path d="M313.500,956v4" stroke="#000" />
            </svg>
            {TIME_LABELS.map(([x, text, bold]) => (
              <span key={x} style={{ left: left(x) }} className={bold ? "absolute top-1.5 -translate-x-1/2 font-bold" : "absolute top-1.5 -translate-x-1/2"}>{text}</span>
            ))}
            <span style={{ left: left(314) }} className="absolute top-1 -translate-x-1/2 border border-[#b8b8b8] bg-gradient-to-b from-[#ffff30] to-[#f0f000] px-px leading-5 whitespace-nowrap">Thu 21-Apr-2016 19:45</span>
          </div>
        </footer>

        <svg viewBox="2 121 1900 865" preserveAspectRatio="none" className="pointer-events-none absolute inset-0 size-full" fill="none" stroke="#f00" strokeWidth="4">
          <path d="M5.500,345.500H333V962.500H5.500Z" />
          <path d="M431,543L328,435" strokeLinecap="round" />
          <path d="M315,423L324,440L335,431Z" fill="#f00" stroke="none" />
        </svg>
      </div>
    </main>
  );
}
